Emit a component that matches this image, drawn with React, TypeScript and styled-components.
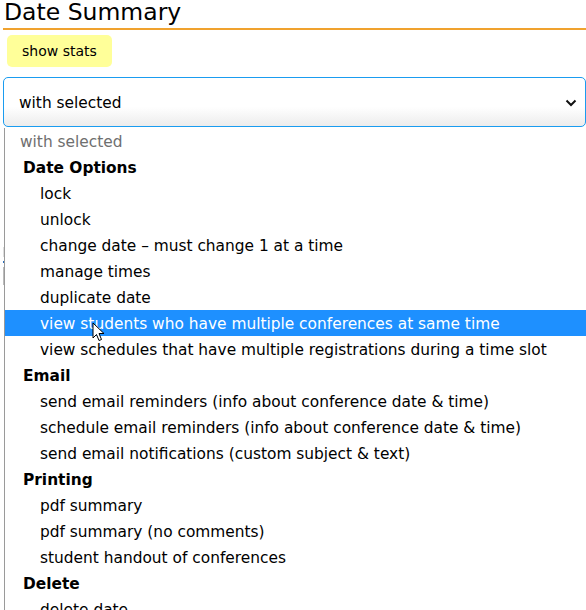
import styled, { createGlobalStyle } from "styled-components";

const Global = createGlobalStyle`
  html, body {
    margin: 0;
    padding: 0;
    background: #fff;
    overflow: hidden;
  }
  body {
    font-family: "DejaVu Sans", Verdana, sans-serif;
    color: #000;
  }
`;

type Item = { label: string; group?: boolean; muted?: boolean; active?: boolean };

const items: Item[] = [
  { label: "with selected", muted: true },
  { label: "Date Options", group: true },
  { label: "lock" },
  { label: "unlock" },
  { label: "change date – must change 1 at a time" },
  { label: "manage times" },
  { label: "duplicate date" },
  { label: "view students who have multiple conferences at same time", active: true },
  { label: "view schedules that have multiple registrations during a time slot" },
  { label: "Email", group: true },
  { label: "send email reminders (info about conference date & time)" },
  { label: "schedule email reminders (info about conference date & time)" },
  { label: "send email notifications (custom subject & text)" },
  { label: "Printing", group: true },
  { label: "pdf summary" },
  { label: "pdf summary (no comments)" },
  { label: "student handout of conferences" },
  { label: "Delete", group: true },
  { label: "delete date" },
];

const Page = styled.div`
  position: relative;
  height: 610px;
  padding: 0 0 0 3px;
`;

const Title = styled.h2`
  margin: 0;
  padding: 0 0 0 1px;
  height: 28px;
  font-size: 23.5px;
  font-weight: normal;
  line-height: 25px;
  border-bottom: 2px solid #f0a22e;
`;

const StatsButton = styled.button`
  margin: 5px 0 0 4px;
  height: 32px;
  padding: 0 15px;
  border: none;
  border-radius: 5px;
  background: #ffff99;
  font-family: inherit;
  font-size: 14px;
  color: #000;
`;

const SelectBox = styled.div`
  margin-top: 10px;
  height: 48px;
  border: 1px solid #1a9cf0;
  border-radius: 5px;
  display: flex;
  align-items: center;
  justify-content: space-between;
  padding: 2px 8px 0 15px;
  box-sizing: content-box;
  height: 46px;
  background: linear-gradient(#fff 60%, #ececec);
  font-size: 15.4px;
`;

const Behind = styled.div`
  display: flex;
  flex-direction: column;
  gap: 4px;
  padding-top: 120px;
`;

const BehindBar = styled.div<{ $color: string; $h: number }>`
  width: 6px;
  height: ${(p) => p.$h}px;
  background: ${(p) => p.$color};
`;

const Menu = styled.ul`
  position: absolute;
  top: 128px;
  left: 4px;
  right: 0;
  margin: 0;
  padding: 0;
  list-style: none;
  background: #fff;
  border-left: 1px solid #9a9a9a;
  font-size: 15.4px;
`;

const Option = styled.li<{ $group?: boolean; $muted?: boolean; $active?: boolean }>`
  height: 25px;
  padding-top: 1px;
  line-height: 26px;
  white-space: nowrap;
  padding-left: ${(p) => (p.$group ? 18 : p.$muted ? 15 : 35)}px;
  font-weight: ${(p) => (p.$group ? "bold" : "normal")};
  color: ${(p) => (p.$active ? "#fff" : p.$muted ? "#6f6f6f" : "#000")};
  background: ${(p) => (p.$active ? "#1e90ff" : "transparent")};
`;

const Cursor = styled.svg`
  position: absolute;
  left: 92px;
  top: 322px;
`;

const Chevron = () => (
  <svg width="12" height="8" viewBox="0 0 12 8">
    <path d="M1.5 1.5 L6 6 L10.5 1.5" fill="none" stroke="#111" strokeWidth="2" />
  </svg>
);

export default function App() {
  return (
    <>
      <Global />
      <Page>
        <Title>Date Summary</Title>
        <StatsButton>show stats</StatsButton>
        <SelectBox>
          <span>with selected</span>
          <Chevron />
        </SelectBox>
        <Behind>
          <BehindBar $color="#ddd" $h={10} />
          <BehindBar $color="#2a6ebb" $h={2} />
          <BehindBar $color="#bbb" $h={18} />
        </Behind>
        <Menu>
          {items.map((it, i) => (
            <Option key={i} $group={it.group} $muted={it.muted} $active={it.active}>
              {it.label}
            </Option>
          ))}
        </Menu>
        <Cursor width="14" height="20" viewBox="0 0 14 20">
          <path d="M1 1 L1 16 L4.5 12.5 L7 18.5 L9.5 17.5 L7 11.5 L12 11.5 Z" fill="#fff" stroke="#000" strokeWidth="1" />
        </Cursor>
      </Page>
    </>
  );
}
